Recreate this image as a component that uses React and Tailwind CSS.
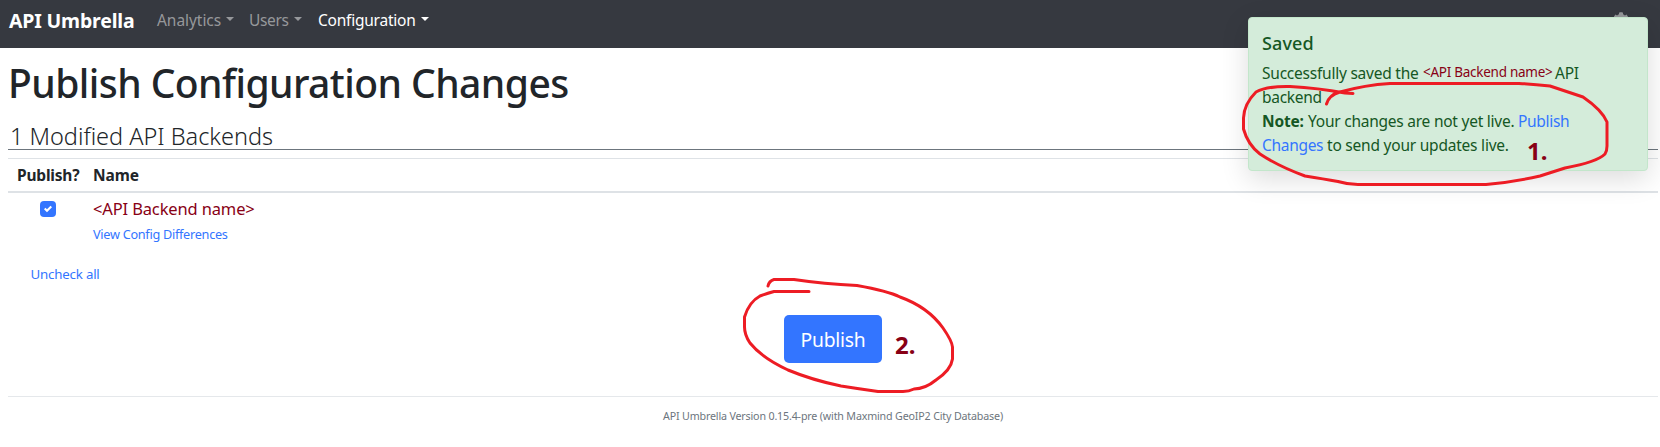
import { FaCog } from "react-icons/fa";

function NavItem({ children, className }) {
  return (
    <a className={`flex items-center whitespace-nowrap text-[15.5px] leading-6 ${className}`}>
      {children}
      <span className="ml-[5px] mt-[-3px] h-0 w-0 border-x-[4.8px] border-t-[4.8px] border-x-transparent border-t-current" />
    </a>
  );
}

function Navbar() {
  return (
    <nav className="flex h-12 items-start bg-[#363940] pl-[9px] pr-[31px] text-white">
      <a className="w-[148px] whitespace-nowrap text-[19.5px] font-bold leading-[41px] tracking-[-0.18px]">API Umbrella</a>
      <div className="flex pt-2">
        <NavItem className="w-[92px] tracking-[-0.05px] text-[#96989b]">Analytics</NavItem>
        <NavItem className="w-[69px] tracking-[-0.35px] text-[#96989b]">Users</NavItem>
        <NavItem className="tracking-[-0.23px] text-white">Configuration</NavItem>
      </div>
      <FaCog className="ml-auto mt-3 size-4 text-[#96989b]" />
    </nav>
  );
}

function Toast() {
  return (
    <div className="absolute left-[1248px] top-[17px] h-[154px] w-[400px] rounded-[4px] border border-[#c3e6cb] bg-[#d4ecda] pl-[13px] pt-3 text-[15.5px] leading-6 text-[#155724] shadow-[0_8px_28px_rgba(0,0,0,0.14)]">
      <h4 className="mb-[4px] text-[18px] font-medium leading-[27px] tracking-[0.1px]">Saved</h4>
      <div className="flex whitespace-nowrap">
        <span className="w-[161px] tracking-[-0.23px]">Successfully saved the</span>
        <span className="-mt-px w-[132px] text-[13.5px] tracking-[-0.27px] text-[#880015]">&lt;API Backend name&gt;</span>
        <span className="tracking-[-0.23px]">API</span>
      </div>
      <div className="tracking-[-0.3px]">backend</div>
      <div className="flex whitespace-nowrap">
        <b className="w-[46px] tracking-[-0.2px]">Note:</b>
        <span className="w-[210px] tracking-[-0.24px]">Your changes are not yet live.</span>
        <a className="tracking-[-0.3px] text-[#3375ff]">Publish</a>
      </div>
      <div className="flex whitespace-nowrap">
        <a className="w-[65px] tracking-[-0.3px] text-[#3375ff]">Changes</a>
        <span className="tracking-[-0.22px]">to send your updates live.</span>
      </div>
    </div>
  );
}

function Annotations() {
  return (
    <>
      <svg className="pointer-events-none absolute left-0 top-0" width="1660" height="447" fill="none" stroke="#ed1c24" strokeWidth="3" strokeLinecap="round" strokeLinejoin="round">
        <path d="M1353 93.5L1345 93Q1318 88 1290 86.500Q1267 86 1256 92Q1244 104 1243.500 118V129Q1248 145 1260 154Q1278 166 1305 176Q1324 179 1338 181.500Q1348 184.500 1358 184.500H1486Q1514 182 1540 176L1565 168Q1597 162 1605 154Q1607 151 1607 146V122Q1602 110 1583 97L1550 86Q1533 84 1519 83.500H1390Q1365 85 1340 92Q1329 95 1326.500 104" />
        <path d="M768 286Q769 281 774 279.500H794Q824 284 857 285.500Q888 291 900 297Q928 307 943 328Q952 341 952.500 347V359Q951 370 936 380Q925 389 914 389Q909 391.500 903 391.500H878Q860 389 841 386Q812 380 788 370Q762 358 750 343Q744 334 744.500 325V317Q749 302 760 296Q768 293 774 291.500H809" />
      </svg>
      <b className="absolute left-[1527px] top-[135px] text-[24px] leading-8 text-[#880015]">1.</b>
      <b className="absolute left-[895px] top-[329px] text-[24px] leading-8 text-[#880015]">2.</b>
    </>
  );
}

export default function App() {
  return (
    <div className="relative h-[447px] w-[1660px] overflow-hidden bg-white font-['Noto_Sans',sans-serif] text-[#212529]">
      <Navbar />
      <main className="ml-2 w-[1650px] pt-[11px]">
        <h1 className="mb-[16px] text-[39px] font-medium leading-[48px] tracking-[-0.55px]">Publish Configuration Changes</h1>
        <h2 className="mb-2 h-[27px] border-b border-[#6c757d] pl-[2px] text-[23.5px] font-light leading-[26px] tracking-[-0.01px]">1 Modified API Backends</h2>
        <div className="flex border-b-2 border-t border-[#dee2e6] pl-[9px] text-[15.5px] font-bold leading-8">
          <span className="w-[76px] tracking-[-0.2px]">Publish?</span>
          <span className="tracking-[-0.1px]">Name</span>
        </div>
        <div className="flex h-[69px]">
          <div className="w-[85px] pl-8 pt-2">
            <span className="flex size-4 items-center justify-center rounded-[4px] bg-[#3375ff]">
              <svg viewBox="0 0 8 8" className="size-2" fill="#fff"><path d="M6.564.75l-3.59 3.612-1.538-1.55L0 4.26l2.974 2.99L8 2.193z" /></svg>
            </span>
          </div>
          <div className="pt-1">
            <div className="text-[16.5px] leading-6 tracking-[-0.14px] text-[#880015]">&lt;API Backend name&gt;</div>
            <a className="mt-px block text-[12.7px] leading-6 tracking-[-0.28px] text-[#3375ff]">View Config Differences</a>
          </div>
        </div>
        <a className="ml-[22.5px] block text-[13.3px] leading-6 tracking-[-0.2px] text-[#3375ff]">Uncheck all</a>
        <button className="ml-[776px] mt-[29px] flex h-12 w-[98px] items-center justify-center rounded-[5px] bg-[#3375ff] pt-0.5 text-[19.3px] leading-[48px] tracking-[-0.25px] text-white">Publish</button>
        <footer className="mt-[33px] border-t border-[#e5e8eb] pt-[9px] text-center text-[10.7px] leading-5 tracking-[-0.17px] text-[#6c757d]">
          API Umbrella Version 0.15.4-pre (with Maxmind GeoIP2 City Database)
        </footer>
      </main>
      <Toast />
      <Annotations />
    </div>
  );
}
